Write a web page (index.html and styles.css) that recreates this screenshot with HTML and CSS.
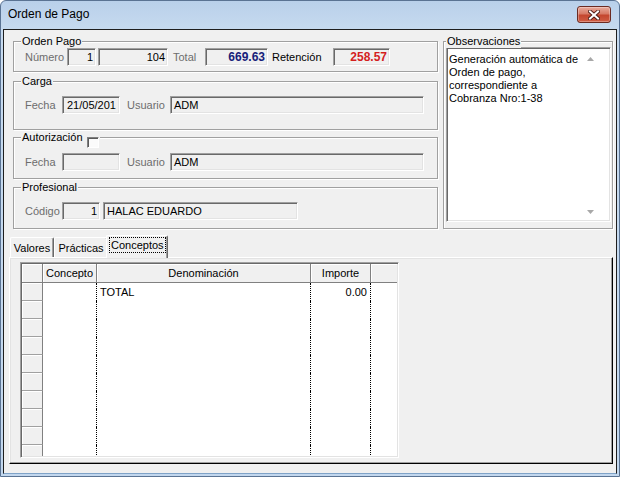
FILE: index.html
```html
<!DOCTYPE html>
<html lang="es">
<head>
<meta charset="utf-8">
<title>Orden de Pago</title>
<link rel="stylesheet" href="styles.css">
</head>
<body>
<div class="window">
  <div class="titlebar">
    <span class="title">Orden de Pago</span>
    <div class="close">
      <svg width="12" height="10" viewBox="0 0 12 10">
        <path d="M2 1.5 L10 8.5 M10 1.5 L2 8.5" stroke="#4a1a14" stroke-width="3.8" stroke-linecap="square"/>
        <path d="M2 1.5 L10 8.5 M10 1.5 L2 8.5" stroke="#fff" stroke-width="2" stroke-linecap="square"/>
      </svg>
    </div>
  </div>
  <div class="client">
    <div class="top">
      <div class="leftcol">
        <div class="group g-orden">
          <span class="legend">Orden Pago</span>
          <div class="row">
            <span class="lbl w-numero">Número</span>
            <div class="field r f-num">1</div>
            <div class="field r f-104">104</div>
            <span class="lbl w-total">Total</span>
            <div class="field r f-total val-blue">669.63</div>
            <span class="lbl dark w-ret">Retención</span>
            <div class="field r f-ret val-red">258.57</div>
          </div>
        </div>
        <div class="group g-carga">
          <span class="legend">Carga</span>
          <div class="row">
            <span class="lbl w-fecha">Fecha</span>
            <div class="field f-fecha">21/05/201</div>
            <span class="lbl w-usuario">Usuario</span>
            <div class="field f-usuario">ADM</div>
          </div>
        </div>
        <div class="group g-aut">
          <span class="legend">Autorización<span class="checkbox"></span></span>
          <div class="row">
            <span class="lbl w-fecha">Fecha</span>
            <div class="field f-fecha"></div>
            <span class="lbl w-usuario">Usuario</span>
            <div class="field f-usuario">ADM</div>
          </div>
        </div>
        <div class="group g-prof">
          <span class="legend">Profesional</span>
          <div class="row">
            <span class="lbl w-fecha">Código</span>
            <div class="field r f-cod">1</div>
            <div class="field f-nombre">HALAC EDUARDO</div>
          </div>
        </div>
      </div>
      <div class="group obs">
        <span class="legend obs-legend">Observaciones</span>
        <div class="memo">
          <div class="memo-text">Generación automática de<br>Orden de pago,<br>correspondiente a<br>Cobranza Nro:1-38</div>
          <div class="sb">
            <div class="sb-btn sb-up"><svg width="7" height="4" viewBox="0 0 7 4"><path d="M0 4 L3.5 0 L7 4 Z" fill="#a8a8a8"/></svg></div>
            <div class="sb-btn sb-down"><svg width="7" height="4" viewBox="0 0 7 4"><path d="M0 0 L3.5 4 L7 0 Z" fill="#a8a8a8"/></svg></div>
          </div>
        </div>
      </div>
    </div>

    <div class="tabarea">
      <div class="tabstrip">
        <div class="tab t1">Valores</div>
        <div class="tab t2">Prácticas</div>
        <div class="tab t3 sel"><span class="focus">Conceptos</span></div>
      </div>
      <div class="tabpage">
        <div class="grid">
          <div class="gtable">
            <div class="hc"></div>
            <div class="hc">Concepto</div>
            <div class="hc">Denominación</div>
            <div class="hc">Importe</div>
            <div class="hc last"></div>

            <div class="rh"></div><div class="dc"></div><div class="dc l">TOTAL</div><div class="dc r">0.00</div><div class="dc last"></div>
            <div class="rh"></div><div class="dc"></div><div class="dc"></div><div class="dc"></div><div class="dc last"></div>
            <div class="rh"></div><div class="dc"></div><div class="dc"></div><div class="dc"></div><div class="dc last"></div>
            <div class="rh"></div><div class="dc"></div><div class="dc"></div><div class="dc"></div><div class="dc last"></div>
            <div class="rh"></div><div class="dc"></div><div class="dc"></div><div class="dc"></div><div class="dc last"></div>
            <div class="rh"></div><div class="dc"></div><div class="dc"></div><div class="dc"></div><div class="dc last"></div>
            <div class="rh"></div><div class="dc"></div><div class="dc"></div><div class="dc"></div><div class="dc last"></div>
            <div class="rh"></div><div class="dc"></div><div class="dc"></div><div class="dc"></div><div class="dc last"></div>
            <div class="rh"></div><div class="dc"></div><div class="dc"></div><div class="dc"></div><div class="dc last"></div>
            <div class="rh"></div><div class="dc"></div><div class="dc"></div><div class="dc"></div><div class="dc last"></div>
          </div>
        </div>
      </div>
    </div>
  </div>
</div>
</body>
</html>
```

FILE: styles.css
```css
* { box-sizing: border-box; }
html, body { margin: 0; padding: 0; }
body {
  width: 620px;
  height: 477px;
  overflow: hidden;
  background: #ffffff;
  font-family: "Liberation Sans", Arial, sans-serif;
  font-size: 11px;
  color: #000;
}

.window {
  width: 620px;
  height: 477px;
  border: 1px solid #5a7393;
  border-radius: 6px 6px 0 0;
  background: linear-gradient(180deg, #b9d0ea 0, #c6daef 28px, #c2d7ee 100%);
  padding: 0 2px 2px 2px;
  display: flex;
  flex-direction: column;
}

.titlebar {
  height: 28px;
  flex: none;
  display: flex;
  justify-content: space-between;
  align-items: flex-start;
  padding: 0 6px 0 5px;
}
.title {
  font-size: 12px;
  line-height: 27px;
  color: #000;
}
.close {
  width: 34px;
  height: 17px;
  margin-top: 5px;
  border: 1px solid #6b2b22;
  border-radius: 3px;
  background: linear-gradient(180deg, #e9ab9c 0%, #d77a66 45%, #c4462f 55%, #cf5d44 100%);
  box-shadow: inset 0 0 0 1px rgba(255, 255, 255, 0.3);
  display: flex;
  align-items: center;
  justify-content: center;
}

.client {
  flex: 1;
  background: #f0f0f0;
  border: 1px solid #1e1e1e;
  border-bottom-color: #7fa3c8;
  padding: 11px 0 0 9px;
}

.top { display: flex; align-items: flex-start; }
.leftcol { width: 425px; flex: none; }

.group {
  position: relative;
  border: 1px solid #a0a0a0;
  box-shadow: inset 1px 1px 0 #fff, 1px 1px 0 #fff;
}
.legend {
  position: absolute;
  top: -7px;
  left: 7px;
  padding: 0 1px;
  background: #f0f0f0;
  line-height: 13px;
  display: flex;
  align-items: flex-start;
  white-space: nowrap;
}
.checkbox {
  width: 12px;
  height: 11px;
  margin-left: 4px;
  margin-top: 6px;
  border-top: 1px solid #808080;
  border-left: 1px solid #808080;
  border-right: 1px solid #fff;
  border-bottom: 1px solid #fff;
  box-shadow: inset 1px 1px 0 #5a5a5a;
  background: #fbfbfb;
}

.g-orden { height: 31px; padding: 6px 0 0 11px; }
.g-carga { height: 49px; margin-top: 9px; padding: 14px 0 0 11px; }
.g-aut   { height: 42px; margin-top: 7px; padding: 15px 0 0 11px; }
.g-prof  { height: 42px; margin-top: 8px; padding: 14px 0 0 11px; }

.row { display: flex; align-items: center; height: 18px; }
.lbl { color: #6d6d6d; white-space: nowrap; flex: none; }
.lbl.dark { color: #000; }
.w-numero { width: 42px; }
.w-total { width: 37px; padding-left: 5px; }
.w-ret { width: 65px; padding-left: 4px; }
.w-fecha { width: 37px; }
.w-usuario { width: 50px; padding-left: 7px; }

.field {
  flex: none;
  height: 18px;
  line-height: 16px;
  padding: 0 3px;
  border: 1px solid;
  border-color: #a0a0a0 #ffffff #ffffff #a0a0a0;
  box-shadow: inset 1px 1px 0 #696969, inset -1px -1px 0 #e3e3e3;
  background: #f0f0f0;
  white-space: nowrap;
  overflow: hidden;
}
.field.r { text-align: right; padding: 0 2px 0 3px; }
.f-num { width: 29px; }
.f-104 { width: 70px; margin-left: 2px; }
.f-total { width: 63px; }
.f-ret { width: 57px; }
.f-fecha { width: 58px; padding-left: 4px; }
.f-usuario { width: 254px; }
.f-cod { width: 38px; }
.f-nombre { width: 195px; margin-left: 3px; }

.val-blue { color: #16207a; font-weight: bold; font-size: 12px; }
.val-red { color: #d41e1e; font-weight: bold; font-size: 12px; }

.obs {
  width: 170px;
  height: 188px;
  margin-left: 5px;
  flex: none;
  padding: 5px 0 0 2px;
}
.obs-legend { left: 2px; }
.memo {
  width: 165px;
  height: 175px;
  background: #fff;
  border: 1px solid;
  border-color: #a0a0a0 #ffffff #ffffff #a0a0a0;
  box-shadow: inset 1px 1px 0 #696969, inset -1px -1px 0 #e3e3e3;
  padding: 1px;
  display: flex;
}
.memo-text {
  flex: 1;
  padding: 4px 0 0 1px;
  line-height: 13px;
  white-space: nowrap;
}
.sb {
  width: 17px;
  margin-right: 10px;
  display: flex;
  flex-direction: column;
  justify-content: space-between;
}
.sb-btn {
  height: 17px;
  display: flex;
  align-items: center;
  justify-content: center;
}
.sb-up { padding-top: 3px; }

.tabarea {
  margin: 6px 0 0 -4px;
  width: 604px;
}
.tabstrip {
  display: flex;
  align-items: flex-end;
  height: 22px;
  padding-left: 1px;
}
.tab {
  height: 20px;
  display: flex;
  align-items: center;
  justify-content: center;
  border-top: 1px solid #fff;
  border-left: 1px solid #fff;
  border-right: 1px solid #696969;
  box-shadow: inset -1px 0 0 #a0a0a0;
  border-radius: 2px 2px 0 0;
  white-space: nowrap;
}
.t1 { width: 44px; }
.t2 { width: 54px; }
.t3 {
  width: 62px;
  height: 23px;
  margin-left: -2px;
  margin-bottom: -1px;
  background: #f0f0f0;
  position: relative;
  z-index: 1;
  align-items: flex-start;
  justify-content: flex-start;
  padding: 1px 0 0 2px;
}
.focus {
  border: 1px dotted #000;
  line-height: 14px;
  padding: 0 1px;
}

.tabpage {
  height: 207px;
  border: 1px solid;
  border-color: #ffffff #000000 #000000 #ffffff;
  box-shadow: inset -1px -1px 0 #a0a0a0, inset 1px 1px 0 #e3e3e3;
  padding: 4px 0 0 10px;
}

.grid {
  width: 379px;
  height: 196px;
  border: 1px solid;
  border-color: #a0a0a0 #ffffff #ffffff #a0a0a0;
  box-shadow: inset 1px 1px 0 #696969, inset -1px -1px 0 #e3e3e3;
  padding: 1px;
  overflow: hidden;
}
.gtable {
  display: grid;
  grid-template-columns: 21px 54px 214px 60px 26px;
  grid-template-rows: 19px;
  grid-auto-rows: 18px;
  height: 192px;
  overflow: hidden;
  background: #fff;
}
.hc {
  background: #f0f0f0;
  border-right: 1px solid #808080;
  border-bottom: 1px solid #808080;
  box-shadow: inset 1px 1px 0 #fff;
  text-align: center;
  line-height: 18px;
  white-space: nowrap;
}
.hc.last { border-right: none; }
.rh {
  background: #f0f0f0;
  border-right: 1px solid #808080;
  border-bottom: 1px solid #a0a0a0;
  box-shadow: inset 1px 1px 0 #fff;
}
.dc {
  background: #fff;
  border-right: 1px dotted #000;
  line-height: 18px;
  padding: 0 3px;
  white-space: nowrap;
}
.dc.r { text-align: right; }
.dc.last { border-right: none; }
```
